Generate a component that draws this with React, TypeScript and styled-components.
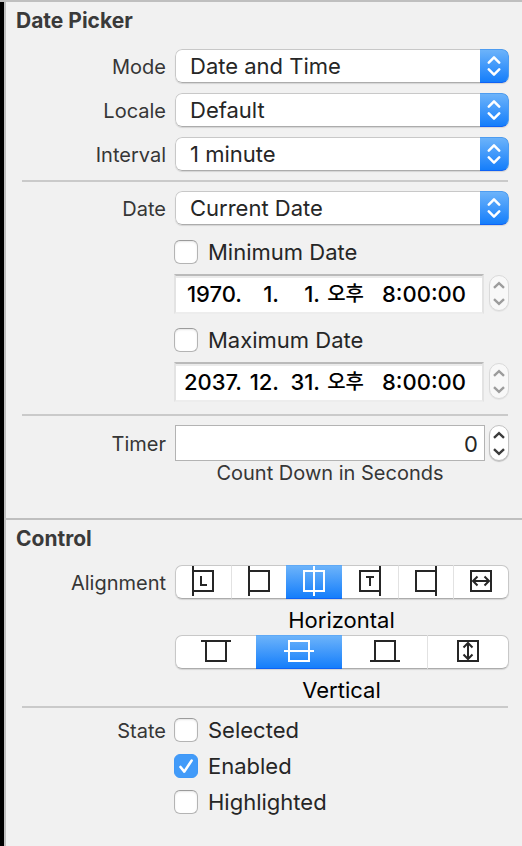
import React, { useId, useState } from "react";
import styled, { createGlobalStyle, css } from "styled-components";

const GlobalStyle = createGlobalStyle`
  *, *::before, *::after { box-sizing: border-box; }
  body {
    margin: 0;
    background: #f1f1f1;
    color: #262626;
    font-family: Inter, "Noto Sans CJK KR", sans-serif;
    font-size: 22px;
  }
  input, select, button { font: inherit; color: inherit; margin: 0; }
`;

const Shell = styled.div`
  display: flex;
  min-height: 100vh;
  border-top: 2px solid #bfbfbf;
`;

const Gutter = styled.div`
  flex: 0 0 4px;
  background: #000;
`;

const Inspector = styled.main`
  flex: 1;
  min-width: 0;
  border-left: 2px solid #bfbfbf;
`;

const Section = styled.section`
  padding-bottom: 33px;

  & + & {
    border-top: 2px solid #bfbfbf;
  }
`;

const Heading = styled.h2<{ $after: number }>`
  margin: 0 0 ${(p) => p.$after}px;
  padding-left: 10px;
  font-size: 21px;
  font-weight: 700;
  line-height: 38px;
  color: #3a3a3a;
`;

const Rule = styled.hr<{ $before?: number; $after?: number }>`
  height: 2px;
  margin: ${(p) => p.$before ?? 9}px 14px ${(p) => p.$after ?? 9}px 16px;
  border: 0;
  background: #cacaca;
`;

const Row = styled.div<{ $gap?: number; $height?: number }>`
  display: grid;
  grid-template-columns: 160px minmax(0, 1fr);
  column-gap: 8px;
  align-items: center;
  min-height: ${(p) => p.$height ?? 34}px;
  margin-top: ${(p) => p.$gap ?? 0}px;
  padding-right: 13px;
`;

const labelText = css`
  padding-top: 2px;
  font-size: 20px;
  line-height: 24px;
  color: #363636;
  text-align: right;
`;

const Label = styled.label`
  ${labelText}
`;

const GroupLabel = styled.span`
  ${labelText}
`;

const Content = styled.div`
  grid-column: 2;
  display: flex;
  align-items: center;
`;

const Popup = styled.div`
  display: grid;
  flex: 1;
  height: 34px;
  margin-left: 1px;
  border-radius: 7px;
  overflow: hidden;
  box-shadow: 0 1px 1px rgba(0, 0, 0, 0.12);
`;

const PopupSelect = styled.select`
  grid-area: 1 / 1;
  appearance: none;
  width: 100%;
  padding: 0 36px 0 14px;
  border: 1px solid #c8c8c8;
  border-bottom-color: #acacac;
  border-radius: 7px;
  background: #fff;
`;

const PopupCap = styled.span`
  grid-area: 1 / 1;
  justify-self: end;
  display: grid;
  place-items: center;
  width: 29px;
  background: linear-gradient(#6cb3fa, #157efb);
  border: solid #4d9cf0;
  border-width: 1px 1px 1px 0;
  border-bottom-color: #0f62f5;
  border-radius: 0 7px 7px 0;
  pointer-events: none;
`;

const Check = styled.label`
  display: flex;
  align-items: center;
  gap: 10px;
  line-height: 28px;
`;

const CheckBox = styled.span`
  display: grid;
  width: 24px;
  height: 24px;

  & > * {
    grid-area: 1 / 1;
  }

  svg {
    pointer-events: none;
    visibility: hidden;
  }

  input:checked + svg {
    visibility: visible;
  }
`;

const CheckInput = styled.input`
  appearance: none;
  width: 24px;
  height: 24px;
  border: 1px solid #b4b4b4;
  border-top-color: #9b9b9b;
  border-radius: 6px;
  background: #fff;
  box-shadow: inset 0 1px 2px rgba(0, 0, 0, 0.1);

  &:checked {
    border-color: #3f98f7;
    background: #429bf9;
    box-shadow: none;
  }
`;

const DateField = styled.div`
  display: flex;
  flex: 1;
  min-width: 0;
  height: 40px;
  margin-right: 5px;
  border: 2px solid #e3e3e3;
  border-top-color: #bababa;
  border-bottom-color: #ededed;
  background: #fff;
  box-shadow: inset 0 2px 0 #ebebeb;
  color: #000;
`;

const DatePart = styled.input<{ $width: number; $word: boolean }>`
  width: ${(p) => p.$width}px;
  min-width: 0;
  padding: ${(p) => (p.$word ? "0 2px 4px 0" : "0")};
  border: 0;
  background: none;
  font-size: ${(p) => (p.$word ? 20 : 22)}px;
  font-weight: 500;
  text-align: right;
`;

const NumberField = styled.input`
  flex: 1;
  min-width: 0;
  height: 36px;
  margin: 0 4px 0 1px;
  padding: 2px 6px 0;
  border: 1px solid #b3b3b3;
  border-radius: 0;
  background: #fff;
  text-align: right;
`;

const StepperBox = styled.div<{ $disabled?: boolean }>`
  display: flex;
  flex-direction: column;
  width: 20px;
  height: 36px;
  margin-bottom: ${(p) => (p.$disabled ? 2 : 0)}px;
  border: 1px solid ${(p) => (p.$disabled ? "#dadada" : "#c2c2c2")};
  border-radius: 10px;
  overflow: hidden;
  background: ${(p) => (p.$disabled ? "#f8f8f8" : "#fff")};
  box-shadow: 0 1px 1px rgba(0, 0, 0, ${(p) => (p.$disabled ? 0.06 : 0.2)});
  color: ${(p) => (p.$disabled ? "#9c9c9c" : "#3c3c3c")};
`;

const StepButton = styled.button`
  display: grid;
  flex: 1;
  place-items: center;
  padding: 0;
  border: 0;
  background: none;
  color: inherit;
`;

const Caption = styled.p<{ $small?: boolean }>`
  grid-column: 2;
  margin: 0;
  padding-top: ${(p) => (p.$small ? 0 : 6)}px;
  padding-right: ${(p) => (p.$small ? 23 : 0)}px;
  font-size: ${(p) => (p.$small ? 20 : 22)}px;
  line-height: ${(p) => (p.$small ? 24 : 30)}px;
  color: ${(p) => (p.$small ? "#363636" : "#000")};
  text-align: center;
`;

const Segments = styled.div<{ $columns: string }>`
  display: grid;
  flex: 1;
  grid-template-columns: ${(p) => p.$columns};
  height: 34px;
  margin-left: 1px;
  border-radius: 7px;
  box-shadow: 0 1px 1px rgba(0, 0, 0, 0.12);
`;

const Segment = styled.button`
  display: flex;
  justify-content: center;
  padding: 0;
  border: solid #c8c8c8;
  border-width: 1px 0;
  border-bottom-color: #acacac;
  background: #fff;
  color: #262626;

  & + & {
    border-left: 1px solid #e2e2e2;
  }
  &:first-child {
    border-left-width: 1px;
    border-radius: 7px 0 0 7px;
  }
  &:last-child {
    border-right-width: 1px;
    border-radius: 0 7px 7px 0;
  }
  &&[aria-pressed="true"] {
    border: solid #5fa9f6;
    border-width: 1px 0;
    border-bottom-color: #0f62f5;
    background: linear-gradient(#6cb3fa, #157efb);
    color: #fff;
  }
  &[aria-pressed="true"] + & {
    border-left-width: 0;
  }
`;

type Glyph =
  | "leading" | "left" | "centerX" | "trailing" | "right" | "fillX"
  | "top" | "centerY" | "bottom" | "fillY";

const glyphPaths: Record<Glyph, string> = {
  leading: "M5 0V30M13 10V19H19",
  left: "M5 0V30",
  centerX: "M15 0V30",
  trailing: "M25 0V30M11 11H19M15 11V20",
  right: "M25 0V30",
  fillX: "M7 15H23M11.5 10.5L7 15L11.5 19.5M18.5 10.5L23 15L18.5 19.5",
  top: "M0 5H30",
  centerY: "M0 15H30",
  bottom: "M0 25H30",
  fillY: "M15 7V23M10.5 11.5L15 7L19.5 11.5M10.5 18.5L15 23L19.5 18.5",
};

const AlignGlyph = ({ name }: { name: Glyph }) => (
  <svg width="30" height="30" viewBox="0 0 30 30" fill="none" stroke="currentColor" strokeWidth="2" shapeRendering={name.startsWith("fill") ? "auto" : "crispEdges"} aria-hidden="true">
    <rect x="5" y="5" width="20" height="20" />
    <path d={glyphPaths[name]} />
  </svg>
);

const Chevron = ({ down }: { down?: boolean }) => (
  <svg width="12" height="8" viewBox="0 0 12 8" fill="none" stroke="currentColor" strokeWidth="2.4" aria-hidden="true">
    <path d={down ? "M1 1.2L6 5.9L11 1.2" : "M1 6.8L6 2.1L11 6.8"} />
  </svg>
);

const PopupRow = ({ label, value, gap }: { label: string; value: string; gap?: number }) => {
  const id = useId();
  return (
    <Row $gap={gap}>
      <Label htmlFor={id}>{label}</Label>
      <Popup>
        <PopupSelect id={id} defaultValue={value}>
          <option>{value}</option>
        </PopupSelect>
        <PopupCap>
          <svg width="14" height="20" viewBox="0 0 14 20" fill="none" stroke="#fff" strokeWidth="2.5" strokeLinecap="round" strokeLinejoin="round" aria-hidden="true">
            <path d="M1.8 6.6L7 1.4L12.2 6.6M1.8 13.4L7 18.6L12.2 13.4" />
          </svg>
        </PopupCap>
      </Popup>
    </Row>
  );
};

const CheckOption = ({ label, checked }: { label: string; checked?: boolean }) => (
  <Check>
    <CheckBox>
      <CheckInput type="checkbox" defaultChecked={checked} />
      <svg width="24" height="24" viewBox="0 0 24 24" fill="none" stroke="#fff" strokeWidth="2.6" strokeLinecap="round" strokeLinejoin="round" aria-hidden="true">
        <path d="M6.5 13L10.3 17.6L17.6 6.6" />
      </svg>
    </CheckBox>
    {label}
  </Check>
);

const Stepper = ({ name, disabled, onStep }: { name: string; disabled?: boolean; onStep?: (by: number) => void }) => (
  <StepperBox $disabled={disabled}>
    <StepButton aria-label={`Increase ${name}`} disabled={disabled} onClick={() => onStep?.(1)}>
      <Chevron />
    </StepButton>
    <StepButton aria-label={`Decrease ${name}`} disabled={disabled} onClick={() => onStep?.(-1)}>
      <Chevron down />
    </StepButton>
  </StepperBox>
);

const datePartWidths: [string, number][] = [
  ["Year", 66],
  ["Month", 37],
  ["Day", 41],
  ["Period", 46],
  ["Time", 100],
];

const DateRow = ({ name, parts }: { name: string; parts: string[] }) => (
  <Row $gap={5} $height={40}>
    <Content>
      <DateField role="group" aria-label={name}>
        {datePartWidths.map(([part, width], i) => (
          <DatePart key={part} aria-label={part} $width={width} $word={part === "Period"} defaultValue={parts[i]} />
        ))}
      </DateField>
      <Stepper name={name} disabled />
    </Content>
  </Row>
);

const SegmentRow = ({ label, title, columns, options, initial }: {
  label?: string;
  title: string;
  columns: string;
  options: Glyph[];
  initial: Glyph;
}) => {
  const [active, setActive] = useState(initial);
  return (
    <>
      <Row>
        {label && <GroupLabel>{label}</GroupLabel>}
        <Content>
          <Segments role="group" aria-label={title} $columns={columns}>
            {options.map((name) => (
              <Segment key={name} aria-label={name} aria-pressed={name === active} onClick={() => setActive(name)}>
                <AlignGlyph name={name} />
              </Segment>
            ))}
          </Segments>
        </Content>
      </Row>
      <Row>
        <Caption>{title}</Caption>
      </Row>
    </>
  );
};

export default function App() {
  const [timer, setTimer] = useState(0);
  return (
    <>
      <GlobalStyle />
      <Shell>
        <Gutter />
        <Inspector>
          <Section>
            <Heading $after={9}>Date Picker</Heading>
            <PopupRow label="Mode" value="Date and Time" />
            <PopupRow label="Locale" value="Default" gap={10} />
            <PopupRow label="Interval" value="1 minute" gap={10} />
            <Rule />
            <PopupRow label="Date" value="Current Date" />
            <Row $gap={10}>
              <Content><CheckOption label="Minimum Date" /></Content>
            </Row>
            <DateRow name="Minimum Date" parts={["1970.", "1.", "1.", "오후", "8:00:00"]} />
            <Row $gap={9}>
              <Content><CheckOption label="Maximum Date" /></Content>
            </Row>
            <DateRow name="Maximum Date" parts={["2037.", "12.", "31.", "오후", "8:00:00"]} />
            <Rule $before={12} />
            <Row $height={36}>
              <Label htmlFor="timer">Timer</Label>
              <Content>
                <NumberField id="timer" inputMode="numeric" value={timer} onChange={(e) => setTimer(Number(e.target.value) || 0)} />
                <Stepper name="Timer" onStep={(by) => setTimer((t) => Math.max(0, t + by))} />
              </Content>
            </Row>
            <Row $height={24}>
              <Caption $small>Count Down in Seconds</Caption>
            </Row>
          </Section>
          <Section>
            <Heading $after={7}>Control</Heading>
            <SegmentRow
              label="Alignment"
              title="Horizontal"
              columns="repeat(6, 1fr)"
              options={["leading", "left", "centerX", "trailing", "right", "fillX"]}
              initial="centerX"
            />
            <SegmentRow
              title="Vertical"
              columns="81fr 86fr 85fr 82fr"
              options={["top", "centerY", "bottom", "fillY"]}
              initial="centerY"
            />
            <Rule $before={1} $after={4} />
            <Row $height={36}>
              <GroupLabel>State</GroupLabel>
              <Content><CheckOption label="Selected" /></Content>
            </Row>
            <Row $height={36}>
              <Content><CheckOption label="Enabled" checked /></Content>
            </Row>
            <Row $height={36}>
              <Content><CheckOption label="Highlighted" /></Content>
            </Row>
          </Section>
        </Inspector>
      </Shell>
    </>
  );
}
